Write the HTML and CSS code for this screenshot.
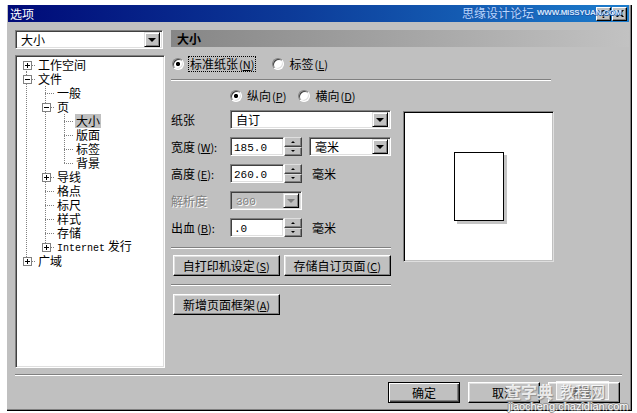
FILE: index.html
```html
<!DOCTYPE html>
<html lang="zh-CN">
<head>
<meta charset="utf-8">
<title>选项</title>
<link rel="stylesheet" href="styles.css">
</head>
<body>
<div class="dialog">
  <div class="titlebar">
    <span class="title">选项</span>
    <div class="tb-buttons">
      <span class="tb-btn help">?</span>
      <span class="tb-btn close"><svg width="8" height="7" viewBox="0 0 8 7"><path d="M0 0h2l2 2.5L6 0h2L5 3.5 8 7H6L4 4.5 2 7H0l3-3.5z" fill="#000"/></svg></span>
    </div>
  </div>

  <div class="main">
    <div class="left">
      <div class="combo nav-combo"><span class="combo-text">大小</span><span class="dd"><i class="tri"></i></span></div>
      <div class="tree">
        <div class="row"><span class="c first"><i class="box plus"></i></span><span class="t">工作空间</span></div>
        <div class="row"><span class="c mid"><i class="box minus"></i></span><span class="t">文件</span></div>
        <div class="row"><span class="c pass"></span><span class="c mid"></span><span class="t">一般</span></div>
        <div class="row"><span class="c pass"></span><span class="c mid"><i class="box minus"></i></span><span class="t">页</span></div>
        <div class="row"><span class="c pass"></span><span class="c pass"></span><span class="c mid"></span><span class="t sel">大小</span></div>
        <div class="row"><span class="c pass"></span><span class="c pass"></span><span class="c mid"></span><span class="t">版面</span></div>
        <div class="row"><span class="c pass"></span><span class="c pass"></span><span class="c mid"></span><span class="t">标签</span></div>
        <div class="row"><span class="c pass"></span><span class="c pass"></span><span class="c last"></span><span class="t">背景</span></div>
        <div class="row"><span class="c pass"></span><span class="c mid"><i class="box plus"></i></span><span class="t">导线</span></div>
        <div class="row"><span class="c pass"></span><span class="c mid"></span><span class="t">格点</span></div>
        <div class="row"><span class="c pass"></span><span class="c mid"></span><span class="t">标尺</span></div>
        <div class="row"><span class="c pass"></span><span class="c mid"></span><span class="t">样式</span></div>
        <div class="row"><span class="c pass"></span><span class="c mid"></span><span class="t">存储</span></div>
        <div class="row"><span class="c pass"></span><span class="c last"><i class="box plus"></i></span><span class="t"><span class="lat">Internet</span> 发行</span></div>
        <div class="row"><span class="c last"><i class="box plus"></i></span><span class="t">广域</span></div>
      </div>
    </div>

    <div class="pane">
      <div class="pane-header">大小</div>
      <div class="paper-type">
        <span class="radio-item"><span class="radio checked"></span><span class="focus">标准纸张<span class="mn">(<u>N</u>)</span></span></span>
        <span class="radio-item second"><span class="radio"></span><span>标签<span class="mn">(<u>L</u>)</span></span></span>
      </div>
      <div class="hr long"></div>

      <div class="settings">
        <div class="form">
          <div class="grid">
            <div class="orient">
              <span class="radio-item"><span class="radio checked"></span><span>纵向<span class="mn">(<u>P</u>)</span></span></span>
              <span class="radio-item second"><span class="radio"></span><span>横向<span class="mn">(<u>D</u>)</span></span></span>
            </div>

            <div class="lbl">纸张</div>
            <div class="combo full"><span class="combo-text">自订</span><span class="dd"><i class="tri"></i></span></div>

            <div class="lbl">宽度<span class="mn">(<u>W</u>):</span></div>
            <div class="ctrl">
              <div class="spin"><span class="field"><span class="num">185.0</span></span><span class="sbtns"><span class="sb up"><i></i></span><span class="sb down"><i></i></span></span></div>
              <div class="combo unit"><span class="combo-text">毫米</span><span class="dd"><i class="tri"></i></span></div>
            </div>

            <div class="lbl">高度<span class="mn">(<u>E</u>):</span></div>
            <div class="ctrl">
              <div class="spin"><span class="field"><span class="num">260.0</span></span><span class="sbtns"><span class="sb up"><i></i></span><span class="sb down"><i></i></span></span></div>
              <span class="unit-text">毫米</span>
            </div>

            <div class="lbl disabled">解析度</div>
            <div class="ctrl">
              <div class="combo small disabled"><span class="combo-text"><span class="num">300</span></span><span class="dd"><i class="tri"></i></span></div>
            </div>

            <div class="lbl">出血<span class="mn">(<u>B</u>):</span></div>
            <div class="ctrl">
              <div class="spin"><span class="field"><span class="num">.0</span></span><span class="sbtns"><span class="sb up"><i></i></span><span class="sb down"><i></i></span></span></div>
              <span class="unit-text">毫米</span>
            </div>
          </div>

          <div class="hr form-hr first-hr"></div>
          <div class="btn-row">
            <span class="btn w107">自打印机设定<span class="mn">(<u>S</u>)</span></span>
            <span class="btn w108">存储自订页面<span class="mn">(<u>C</u>)</span></span>
          </div>
          <div class="hr form-hr second-hr"></div>
          <div class="btn-row last-row">
            <span class="btn w107">新增页面框架<span class="mn">(<u>A</u>)</span></span>
          </div>
        </div>

        <div class="preview"><div class="paper"></div></div>
      </div>
    </div>
  </div>

  <div class="hr bottom-hr"></div>
  <div class="footer">
    <span class="btn dlg default">确定</span>
    <span class="btn dlg">取消</span>
    <span class="btn dlg">帮助</span>
  </div>
</div>

<div class="wm-title"><span class="wm-cn">思缘设计论坛</span><span class="wm-en">WWW.MISSYUAN.COM</span></div>
<div class="wm-bottom">
  <div class="wm-line"><span class="wm-big">查字典</span><span class="wm-box">教程网</span></div>
  <div class="wm-url">jiaocheng.chazidian.com</div>
</div>
</body>
</html>
```

FILE: styles.css
```css
* { box-sizing: border-box; }

body {
  margin: 0;
  width: 637px;
  height: 413px;
  overflow: hidden;
  position: relative;
  background: #fff;
  font-family: "Noto Sans CJK SC", "Noto Sans", sans-serif;
  font-size: 12px;
  line-height: 14px;
  color: #000;
}

u { text-decoration: underline; text-underline-offset: 1px; }

.mn { font-size: 11px; margin-left: 1px; }
.num, .lat { font-family: "Liberation Mono", "DejaVu Sans Mono", monospace; font-size: 11px; }
.lat { font-size: 10px; }

/* ---------- dialog frame ---------- */
.dialog {
  margin: 5px 0 0 7px;
  width: 625px;
  height: 406px;
  padding: 0 2px 0 1px;
  background: #c0c0c0;
  border-right: 1px solid #000;
  border-bottom: 1px solid #000;
  box-shadow: inset -1px -1px #808080;
  display: flex;
  flex-direction: column;
}

.titlebar {
  height: 17px;
  flex: none;
  display: flex;
  align-items: center;
  justify-content: space-between;
  padding: 0 2px 0 2px;
  background: linear-gradient(90deg, #000a78 0%, #0c3a98 45%, #1c7ccc 100%);
  color: #fff;
}
.title { font-size: 12px; line-height: 14px; }
.tb-buttons { display: flex; gap: 1px; }
.tb-btn {
  width: 15px;
  height: 14px;
  background: #c0c0c0;
  border: 1px solid;
  border-color: #fff #000 #000 #fff;
  box-shadow: inset -1px -1px #808080;
  display: flex;
  align-items: center;
  justify-content: center;
  color: #000;
  font-family: "Liberation Sans", sans-serif;
  font-weight: bold;
  font-size: 11px;
  line-height: 10px;
}

/* ---------- main area ---------- */
.main {
  display: flex;
  gap: 6px;
  padding: 8px 0 0 7px;
  height: 346px;
  flex: none;
}
.left { width: 150px; display: flex; flex-direction: column; gap: 6px; }

.combo {
  height: 19px;
  display: flex;
  align-items: center;
  background: #fff;
  border: 1px solid;
  border-color: #808080 #fff #fff #808080;
  box-shadow: inset 1px 1px #404040, inset -1px -1px #dfdfdf;
  padding: 2px;
}
.combo-text { flex: 1; padding-left: 3px; line-height: 14px; }
.nav-combo { width: 148px; }
.dd {
  width: 16px;
  height: 15px;
  flex: none;
  background: #c0c0c0;
  border: 1px solid;
  border-color: #dfdfdf #000 #000 #dfdfdf;
  box-shadow: inset 1px 1px #fff, inset -1px -1px #808080;
  display: flex;
  align-items: center;
  justify-content: center;
}
.tri {
  width: 0; height: 0;
  border-left: 4px solid transparent;
  border-right: 4px solid transparent;
  border-top: 4px solid #000;
  margin-top: 1px;
}

/* ---------- tree ---------- */
.tree {
  height: 313px;
  background: #fff;
  border: 1px solid;
  border-color: #808080 #fff #fff #808080;
  box-shadow: inset 1px 1px #404040, inset -1px -1px #dfdfdf;
  padding: 2px 0 0 1px;
}
.row { display: flex; align-items: center; height: 14px; }
.c {
  width: 19px;
  height: 14px;
  flex: none;
  display: flex;
  align-items: center;
  justify-content: center;
  background-repeat: no-repeat;
}
.c.pass {
  background-image: repeating-linear-gradient(180deg, #808080 0 1px, transparent 1px 2px);
  background-size: 1px 14px;
  background-position: 9px 0;
}
.c.mid {
  background-image:
    repeating-linear-gradient(180deg, #808080 0 1px, transparent 1px 2px),
    repeating-linear-gradient(90deg, #808080 0 1px, transparent 1px 2px);
  background-size: 1px 14px, 11px 1px;
  background-position: 9px 0, 9px 7px;
}
.c.last {
  background-image:
    repeating-linear-gradient(180deg, #808080 0 1px, transparent 1px 2px),
    repeating-linear-gradient(90deg, #808080 0 1px, transparent 1px 2px);
  background-size: 1px 8px, 11px 1px;
  background-position: 9px 0, 9px 7px;
}
.c.first {
  background-image:
    repeating-linear-gradient(180deg, #808080 0 1px, transparent 1px 2px),
    repeating-linear-gradient(90deg, #808080 0 1px, transparent 1px 2px);
  background-size: 1px 7px, 11px 1px;
  background-position: 9px 7px, 9px 7px;
}
.box {
  width: 9px;
  height: 9px;
  border: 1px solid #808080;
  background-color: #fff;
  background-repeat: no-repeat;
  margin-left: 1px;
}
.box.minus {
  background-image: linear-gradient(#000, #000);
  background-size: 5px 1px;
  background-position: center;
}
.box.plus {
  background-image: linear-gradient(#000, #000), linear-gradient(#000, #000);
  background-size: 5px 1px, 1px 5px;
  background-position: center, center;
}
.t { margin-left: 1px; padding: 0 1px; line-height: 14px; white-space: nowrap; }
.t.sel { background: #c0c0c0; }

/* ---------- right pane ---------- */
.pane { flex: 1; display: flex; flex-direction: column; }
.pane-header {
  height: 17px;
  flex: none;
  background: linear-gradient(90deg, #868686, #c2c2c2);
  font-weight: bold;
  padding-left: 6px;
  line-height: 17px;
}

.paper-type {
  margin-top: 10px;
  height: 14px;
  display: flex;
  align-items: center;
  padding-left: 1px;
}
.radio-item { display: flex; align-items: center; gap: 5px; white-space: nowrap; }
.radio-item.second { margin-left: 17px; }
.radio {
  width: 12px;
  height: 12px;
  flex: none;
  border-radius: 50%;
  background: #fff;
  border: 1px solid;
  border-color: #808080 #fff #fff #808080;
  box-shadow: inset 1px 1px #404040, inset -1px -1px #dfdfdf;
}
.radio.checked {
  background: radial-gradient(circle, #000 0 1.8px, transparent 2.4px), #fff;
}
.focus { outline: 1px dotted #000; outline-offset: 0; padding: 0 1px; }

.hr {
  height: 2px;
  border-top: 1px solid #808080;
  border-bottom: 1px solid #fff;
  flex: none;
}
.hr.long { width: 380px; margin-top: 8px; }

.settings { display: flex; gap: 12px; margin-top: 9px; }
.form { width: 220px; display: flex; flex-direction: column; }
.grid {
  display: grid;
  grid-template-columns: 59px 161px;
  grid-template-rows: 12px repeat(5, 19px);
  row-gap: 8px;
  align-items: center;
}
.orient { grid-column: 2; display: flex; align-items: center; }
.orient .radio-item.second { margin-left: 12px; }
.lbl { white-space: nowrap; }
.lbl .mn { margin-left: 2px; }
.lbl.disabled { color: #808080; text-shadow: 1px 1px #fff; }
.combo.full { width: 161px; }
.ctrl { display: flex; align-items: center; }
.combo.unit { width: 82px; margin-left: 7px; }
.combo.small { width: 72px; }
.combo.disabled { background: #c0c0c0; color: #808080; }
.combo.disabled .tri { border-top-color: #808080; }
.combo.disabled .combo-text .num { text-shadow: 1px 1px #fff; }

.spin { display: flex; width: 72px; height: 19px; }
.field {
  flex: 1;
  background: #fff;
  border: 1px solid;
  border-color: #808080 #fff #fff #808080;
  box-shadow: inset 1px 1px #404040, inset -1px -1px #dfdfdf;
  padding: 1px 0 0 3px;
  line-height: 14px;
}
.sbtns { width: 18px; display: flex; flex-direction: column; }
.sb {
  flex: 1;
  background: #c0c0c0;
  border: 1px solid;
  border-color: #dfdfdf #404040 #404040 #fff;
  box-shadow: inset -1px -1px #808080;
  display: flex;
  align-items: center;
  justify-content: center;
}
.sb i { width: 0; height: 0; border-left: 2px solid transparent; border-right: 2px solid transparent; }
.sb.up i { border-bottom: 2px solid #000; }
.sb.down i { border-top: 2px solid #000; }
.unit-text { margin-left: 10px; }

.form-hr { width: 220px; }
.first-hr { margin-top: 10px; }
.second-hr { margin-top: 8px; }
.btn-row { display: flex; gap: 4px; padding-left: 2px; margin-top: 6px; }
.last-row { margin-top: 8px; }

.btn {
  height: 21px;
  display: flex;
  align-items: center;
  justify-content: center;
  background: #c0c0c0;
  border: 1px solid;
  border-color: #fff #000 #000 #fff;
  box-shadow: inset -1px -1px #808080, inset 1px 1px #dfdfdf;
  white-space: nowrap;
}
.w107 { width: 107px; }
.w108 { width: 108px; }

.preview {
  width: 151px;
  height: 151px;
  margin-top: 21px;
  background: #fff;
  border: 1px solid;
  border-color: #808080 #dfdfdf #dfdfdf #808080;
  box-shadow: inset 1px 1px #000, inset -1px -1px #c0c0c0;
  display: flex;
  align-items: center;
  justify-content: center;
}
.paper {
  width: 50px;
  height: 69px;
  border: 1.5px solid #000;
  background: #fff;
  box-shadow: 3px 3px 0 #c4c4c4;
}

/* ---------- footer ---------- */
.bottom-hr { margin: 6px 7px 0 7px; }
.footer {
  display: flex;
  justify-content: flex-end;
  gap: 8px;
  padding-right: 9px;
  margin-top: 6px;
}
.btn.dlg { width: 72px; }
.btn.default {
  border: 1px solid #000;
  box-shadow: inset 1px 1px #fff, inset -1px -1px #404040, inset -2px -2px #808080;
}

/* ---------- watermarks (overlays) ---------- */
.wm-title {
  position: absolute;
  left: 462px;
  top: 6px;
  display: flex;
  align-items: center;
  gap: 3px;
  white-space: nowrap;
  color: #b8d8ff;
  pointer-events: none;
}
.wm-cn {
  font-size: 12px;
  line-height: 14px;
  text-shadow: 0 0 1px #1040a0, 1px 0 #2060b0, -1px 0 #2060b0;
}
.wm-en {
  font-family: "Liberation Sans", sans-serif;
  font-size: 8px;
  font-weight: bold;
  letter-spacing: -0.2px;
  color: #d0e6ff;
  text-shadow: 0 1px #1a56a6, 1px 0 #1a56a6;
}
.wm-bottom {
  position: absolute;
  left: 505px;
  top: 381px;
  width: 125px;
  white-space: nowrap;
  pointer-events: none;
}
.wm-line { display: flex; align-items: center; gap: 3px; }
.wm-big {
  font-size: 16px;
  line-height: 18px;
  font-weight: bold;
  color: rgba(255,255,255,0.8);
  text-shadow: 1px 1px 1px #909090;
}
.wm-box {
  font-size: 15px;
  line-height: 17px;
  padding: 0 3px;
  color: rgba(255,255,255,0.85);
  background: rgba(255,255,255,0.35);
  border: 1px solid rgba(255,255,255,0.8);
  text-shadow: 1px 1px 1px #808080;
}
.wm-url {
  font-family: "Liberation Sans", sans-serif;
  font-size: 11px;
  line-height: 12px;
  color: #fff;
  margin-left: 3px;
  text-shadow: 1px 0 #8a8a8a, -1px 0 #8a8a8a, 0 1px #8a8a8a, 0 -1px #8a8a8a;
}
```
